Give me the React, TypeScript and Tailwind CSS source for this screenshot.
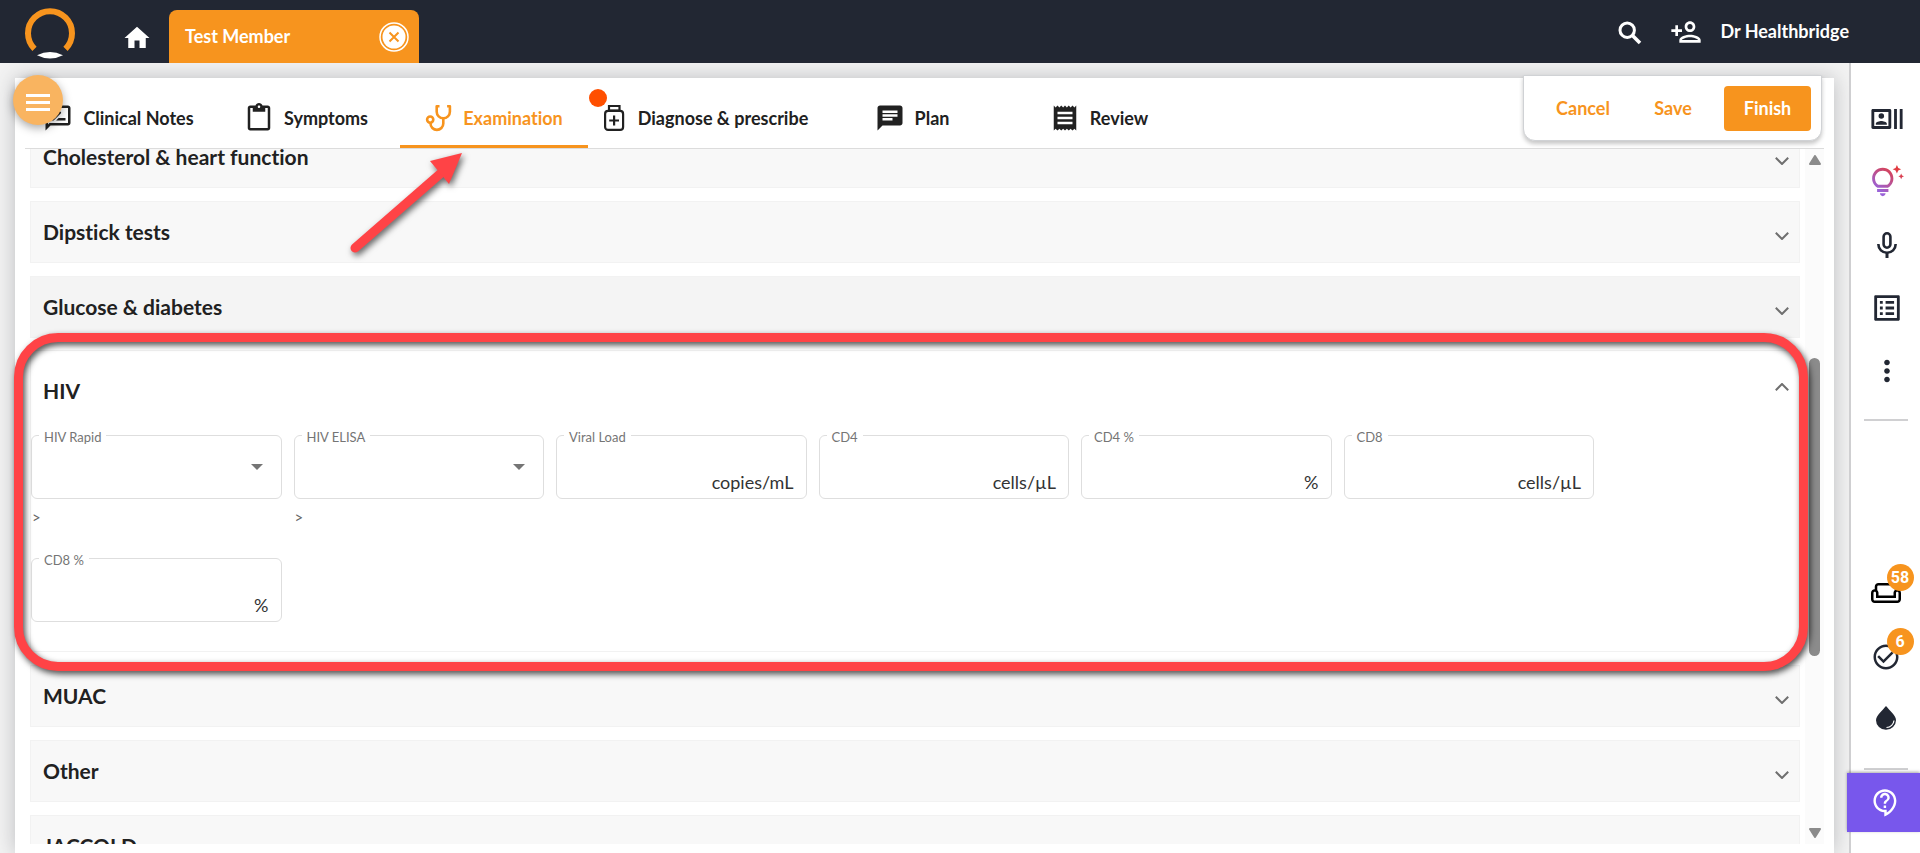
import React, { useState } from "react";
import {
    MdChat,
    MdCheckCircleOutline,
    MdContentPaste,
    MdHome,
    MdMoreVert,
    MdOutlineContactSupport,
    MdOutlineListAlt,
    MdOutlinePersonAdd,
    MdOutlineRateReview,
    MdOutlineRecentActors,
    MdOutlineTipsAndUpdates,
    MdOutlineWeekend,
    MdReceipt,
} from "react-icons/md";

function Logo() {
    return (
        <svg viewBox="0 0 52 52" className="h-[52px] w-[52px]" aria-label="Healthbridge">
            <path d="M10.5 41.8 A22 22 0 1 1 41.5 41.8" fill="none" stroke="#f7941e" strokeWidth="6" />
            <path d="M13 48.2 Q26 41.6 39 48.2 Q26 54.8 13 48.2Z" fill="#fff" />
        </svg>
    );
}

function SearchIcon() {
    return (
        <svg viewBox="0 0 24 24" className="h-6 w-6" fill="none" stroke="currentColor" strokeWidth="3">
            <circle cx="9.2" cy="9.2" r="7.2" />
            <path d="M14.2 14.2 22 22" strokeWidth="3.6" />
        </svg>
    );
}

function MicIcon() {
    return (
        <svg viewBox="0 0 34 34" className="h-[34px] w-[34px]" fill="none" stroke="currentColor" strokeWidth="2.6">
            <rect x="13.6" y="5.3" width="6.8" height="14.4" rx="3.4" />
            <path d="M8.4 16v.6a8.6 8.2 0 0 0 17.2 0V16" />
            <path d="M17 24.8V30" strokeWidth="3" />
        </svg>
    );
}

function StethoscopeIcon() {
    return (
        <svg viewBox="0 0 28 28" className="h-7 w-7" fill="none" stroke="currentColor" strokeWidth="2.6">
            <path d="M14.5 2.3h-2.8v5.4a6.6 6.6 0 0 0 13.2 0V2.3h-2.8" strokeLinejoin="round" />
            <path d="M18.3 14.2v5.3a6.4 6.4 0 0 1-12.8 0v-.8" />
            <circle cx="5.2" cy="15.6" r="3.1" />
        </svg>
    );
}

function MedicineIcon() {
    return (
        <svg viewBox="0 0 28 28" className="h-7 w-7" fill="none" stroke="currentColor" strokeWidth="2.2">
            <path d="M9 2h10.5v4.6H9z" />
            <rect x="5.1" y="6.9" width="18" height="19" rx="3" />
            <path d="M14.1 11.6v9.8M9.2 16.5H19" />
        </svg>
    );
}

function DropIcon() {
    return (
        <svg viewBox="0 0 20 24" className="h-6 w-5">
            <path d="M10 0C6 5 0 9.5 0 14.2a10 9.6 0 0 0 20 0C20 9.5 14 5 10 0z" fill="#222733" />
            <path d="M18 14.5a8 7.5 0 0 1-7.5 7" fill="none" stroke="#fff" strokeWidth="1.2" />
        </svg>
    );
}

function Chevron({ up = false }: { up?: boolean }) {
    return (
        <svg viewBox="0 0 14 8" className={`h-2 w-3.5 ${up ? "rotate-180" : ""}`} fill="none" stroke="#6f6f6f" strokeWidth="2">
            <path d="M.8.8 7 7 13.2.8" />
        </svg>
    );
}

const TABS = [
    { id: "notes", label: "Clinical Notes", icon: <MdOutlineRateReview size={30} />, width: "w-[187px]" },
    { id: "symptoms", label: "Symptoms", icon: <MdContentPaste size={30} />, width: "w-[188px]" },
    { id: "examination", label: "Examination", icon: <StethoscopeIcon />, width: "w-[188px]" },
    { id: "diagnose", label: "Diagnose & prescribe", icon: <MedicineIcon />, width: "w-[232px]" },
    { id: "plan", label: "Plan", icon: <MdChat size={30} />, width: "w-[184px]" },
    { id: "review", label: "Review", icon: <MdReceipt size={30} />, width: "w-[190px]" },
];

const FIELDS = [
    { id: "rapid", label: "HIV Rapid", select: true },
    { id: "elisa", label: "HIV ELISA", select: true },
    { id: "viral", label: "Viral Load", unit: "copies/mL" },
    { id: "cd4", label: "CD4", unit: "cells/µL" },
    { id: "cd4pct", label: "CD4 %", unit: "%" },
    { id: "cd8", label: "CD8", unit: "cells/µL" },
    { id: "cd8pct", label: "CD8 %", unit: "%" },
];

interface FieldProps {
    id: string;
    label: string;
    unit?: string;
    select?: boolean;
}

function Field({ id, label, unit, select }: FieldProps) {
    return (
        <div className="relative h-[92px]">
            <label htmlFor={id} className="absolute -top-2 left-2 bg-white px-[5px] text-[13px] leading-5 text-[#757575]">
                {label}
            </label>
            {select ? (
                <>
                    <select id={id} className="h-16 w-full appearance-none rounded-md border border-[#dedede] bg-transparent px-3" />
                    <svg viewBox="0 0 12 6" className="pointer-events-none absolute right-[19px] top-[29px] h-1.5 w-3">
                        <path d="M0 0h12L6 6z" fill="#757575" />
                    </svg>
                    <p className="mt-2 pl-px text-[15px] leading-5 text-[#666]">&gt;</p>
                </>
            ) : (
                <div className="flex h-16 w-full items-end rounded-md border border-[#dedede] px-3 pb-0.5">
                    <input id={id} className="min-w-0 flex-1 bg-transparent leading-6 outline-none" />
                    <span className="text-[18px] leading-7 text-[#333]">{unit}</span>
                </div>
            )}
        </div>
    );
}

function Panel({ title, active = false }: { title: string; active?: boolean }) {
    return (
        <button
            className={`flex h-[62px] w-full shrink-0 items-center justify-between border border-[#f2f2f2] pl-3 pr-2.5 text-left ${active ? "bg-[#f4f4f4]" : "bg-[#f8f8f8]"}`}
        >
            <span className="text-[21px] font-bold leading-7">{title}</span>
            <span className="pt-2">
                <Chevron />
            </span>
        </button>
    );
}

function Badge({ children }: { children: React.ReactNode }) {
    return (
        <span className="absolute -right-[13px] -top-3.5 flex h-[27px] w-[27px] items-center justify-center rounded-full bg-[#f7941e] font-[Roboto,sans-serif] text-base font-bold text-white">
            {children}
        </span>
    );
}

function SideBar() {
    return (
        <aside className="flex w-[71px] shrink-0 flex-col items-center border-l-2 border-[#cfcfd1] bg-white pt-[39px] text-[#222733]">
            <div className="flex flex-col items-center gap-[29px] pl-0.5">
                <button aria-label="Patient details">
                    <MdOutlineRecentActors size={34} />
                </button>
                <button aria-label="Suggestions">
                    <svg className="absolute h-0 w-0">
                        <linearGradient id="bulb" gradientUnits="userSpaceOnUse" x1="19" y1="3" x2="8" y2="19">
                            <stop offset="0" stopColor="#e23b3f" />
                            <stop offset="1" stopColor="#9a63d8" />
                        </linearGradient>
                    </svg>
                    <MdOutlineTipsAndUpdates size={34} className="fill-[url(#bulb)]" />
                </button>
                <button aria-label="Dictate">
                    <MicIcon />
                </button>
                <button aria-label="Lists">
                    <MdOutlineListAlt size={34} />
                </button>
                <button aria-label="More">
                    <MdMoreVert size={34} />
                </button>
            </div>
            <hr className="mt-[31px] w-11 border-t-2 border-[#d0d0d2]" />
            <div className="mt-[157px] flex flex-col items-center gap-[34px]">
                <button aria-label="Waiting room" className="relative text-black">
                    <MdOutlineWeekend size={30} />
                    <Badge>58</Badge>
                </button>
                <button aria-label="Tasks" className="relative">
                    <MdCheckCircleOutline size={30} />
                    <Badge>6</Badge>
                </button>
                <button aria-label="Theme">
                    <DropIcon />
                </button>
            </div>
            <hr className="mt-[38px] w-11 border-t-2 border-[#d0d0d2]" />
            <button aria-label="Help" className="mt-[3px] flex h-[59px] w-[73px] shrink-0 items-center justify-center self-end bg-[#7857ec] pl-1 text-white shadow-[0_-1px_3px_rgba(0,0,0,0.35)]">
                <MdOutlineContactSupport size={29} />
            </button>
        </aside>
    );
}

export default function App() {
    const [tab, setTab] = useState("examination");

    return (
        <div className="relative flex h-screen flex-col overflow-hidden bg-[#f3f3f3] font-[Lato,sans-serif] text-[#212121] [font-variant-ligatures:none]">
            <header className="flex h-[63px] shrink-0 items-center bg-[#222733] pl-6 pr-[71px] text-white">
                <div className="pt-0.5">
                    <Logo />
                </div>
                <button aria-label="Home" className="ml-[46px] mt-3">
                    <MdHome size={30} />
                </button>
                <div className="ml-[17px] flex h-[53px] w-[250px] items-center justify-between self-end rounded-t-lg bg-[#f7941e] pl-4 pr-2.5">
                    <span className="text-[18px] font-bold">Test Member</span>
                    <button aria-label="Close tab">
                        <svg viewBox="0 0 30 30" className="h-[30px] w-[30px]">
                            <circle cx="15" cy="15" r="14" fill="none" stroke="#fff" strokeWidth="1.5" />
                            <circle cx="15" cy="15" r="11.5" fill="#fff" />
                            <path d="M10.5 10.5l9 9M19.5 10.5l-9 9" stroke="#f7941e" strokeWidth="2" />
                        </svg>
                    </button>
                </div>
                <div className="ml-auto flex items-center">
                    <button aria-label="Search" className="pt-0.5">
                        <SearchIcon />
                    </button>
                    <button aria-label="Add patient" className="ml-7">
                        <MdOutlinePersonAdd size={32} />
                    </button>
                    <span className="ml-[18px] text-[18px] font-bold">Dr Healthbridge</span>
                </div>
            </header>

            <div className="flex min-h-0 flex-1">
                <main className="flex min-w-0 flex-1 flex-col overflow-hidden px-[15px] pt-[15px]">
                    <section className="flex min-h-0 flex-1 flex-col bg-white px-2.5 pb-[9px] shadow-[0_0_20px_rgba(60,64,72,0.3)]">
                        <nav className="flex h-[71px] shrink-0 border-b border-[#dcdcdc]">
                            {TABS.map((t) => (
                                <button
                                    key={t.id}
                                    onClick={() => setTab(t.id)}
                                    className={`${t.width} relative flex items-center justify-center gap-2.5 border-b-[3px] pt-3 ${t.id === tab ? "border-[#f7941e] text-[#f7941e]" : "border-transparent"}`}
                                >
                                    {t.icon}
                                    <span className="whitespace-nowrap text-[18px] font-bold leading-6">{t.label}</span>
                                    {t.id === "diagnose" && <span className="absolute left-px top-[11px] h-[18px] w-[18px] rounded-full bg-[#ff4f00]" />}
                                </button>
                            ))}
                        </nav>
                        <div className="flex min-h-0 flex-1 overflow-hidden">
                            <div className="-mt-[23px] ml-[5px] flex min-w-0 flex-1 flex-col gap-[13px]">
                                <Panel title="Cholesterol & heart function" />
                                <Panel title="Dipstick tests" />
                                <Panel title="Glucose & diabetes" active />
                                <div className="-mt-px shrink-0 border border-[#f2f2f2] pb-px">
                                    <button className="flex h-20 w-full items-center justify-between pl-3 pr-2.5">
                                        <span className="text-[21px] font-bold leading-7">HIV</span>
                                        <span className="pb-2">
                                            <Chevron up />
                                        </span>
                                    </button>
                                    <div className="grid w-full max-w-[1563px] grid-cols-6 gap-x-3 gap-y-[31px] pt-1">
                                        {FIELDS.map((f) => (
                                            <Field key={f.id} {...f} />
                                        ))}
                                    </div>
                                </div>
                                <Panel title="MUAC" />
                                <Panel title="Other" />
                                <Panel title="JACCOLD" />
                            </div>
                            <div className="ml-[5px] flex w-[19px] shrink-0 flex-col items-center bg-[#fbfbfb] py-[6px]">
                                <svg viewBox="0 0 12 10" className="h-2.5 w-3">
                                    <path d="M6 1 11 9H1z" fill="#8b8b8b" stroke="#8b8b8b" strokeLinejoin="round" strokeWidth="2" />
                                </svg>
                                <div className="mt-[193px] h-[298px] w-[11px] rounded-full bg-[#8b8b8b]" />
                                <svg viewBox="0 0 12 10" className="mt-auto h-2.5 w-3">
                                    <path d="M6 9 1 1h10z" fill="#8b8b8b" stroke="#8b8b8b" strokeLinejoin="round" strokeWidth="2" />
                                </svg>
                            </div>
                        </div>
                    </section>
                </main>
                <SideBar />
            </div>

            {/* floating actions */}
            <div className="absolute right-[98px] top-[75px] flex h-[66px] items-center rounded-b-xl border border-[#d0d2d5] bg-white pl-4 pr-2.5 text-[18px] font-bold text-[#f7941e] shadow-[0_3px_4px_rgba(0,0,0,0.22)]">
                <button className="w-[86px]">Cancel</button>
                <button className="ml-1 w-[86px]">Save</button>
                <button className="ml-2 h-[45px] w-[87px] rounded bg-[#f7941e] text-white">Finish</button>
            </div>
            <button
                aria-label="Menu"
                className="absolute left-[13px] top-[75px] flex h-[50px] w-[50px] flex-col items-center justify-center gap-1 rounded-full bg-[#f9b460] pt-1 shadow-[0_3px_10px_rgba(0,0,0,0.35)]"
            >
                <span className="h-[3px] w-6 bg-white" />
                <span className="h-[3px] w-6 bg-white" />
                <span className="h-[3px] w-6 bg-white" />
            </button>

            {/* callouts */}
            <div className="pointer-events-none absolute left-[14px] right-28 top-[333px] h-[338px] rounded-[44px] border-[9px] border-[#ff4346] drop-shadow-[2px_3px_3px_rgba(0,0,0,0.7)]" />
            <svg viewBox="0 0 130 120" className="pointer-events-none absolute left-[345px] top-[145px] h-[120px] w-[130px] drop-shadow-[2px_3px_3px_rgba(0,0,0,0.6)]">
                <path d="M10 103 95 29" stroke="#ff4346" strokeWidth="9" strokeLinecap="round" />
                <path d="M117 8 85 16 104 39z" fill="#ff4346" />
            </svg>
        </div>
    );
}
